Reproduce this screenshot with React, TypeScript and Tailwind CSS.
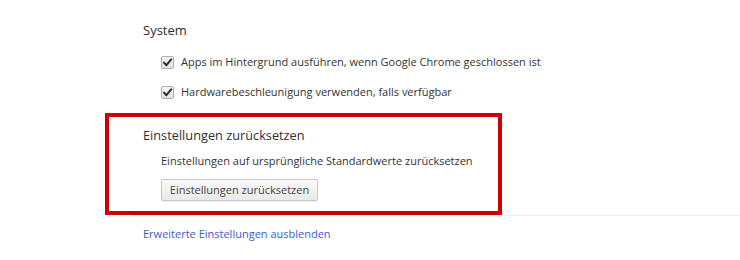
import React from "react";

function Check() {
  return (
    <span className="flex h-[13px] w-[13px] shrink-0 items-center justify-center rounded-[2px] border border-[#b0b0b0] bg-gradient-to-b from-[#f6f6f6] to-[#e2e2e2]">
      <svg width="11" height="11" viewBox="0 0 11 11">
        <path d="M2 5.6 L4.4 8.2 L9.2 2.4" fill="none" stroke="#2b2b2b" strokeWidth="2" strokeLinecap="round" strokeLinejoin="round" />
      </svg>
    </span>
  );
}

export default function App() {
  return (
    <div className="h-[260px] w-[740px] overflow-hidden whitespace-nowrap bg-white pt-[20px] text-[#333] [font-family:'Open_Sans','Noto_Sans',sans-serif]">
      <div className="flex h-[22px] items-center pl-[143px] text-[13px] text-[#303030]">System</div>
      <div className="pl-[161px]">
        <div className="mt-[5px] flex h-[30px] items-center gap-[7px] text-[11px]">
          <Check />
          <span>Apps im Hintergrund ausführen, wenn Google Chrome geschlossen ist</span>
        </div>
        <div className="flex h-[30px] items-center gap-[7px] text-[11px]">
          <Check />
          <span>Hardwarebeschleunigung verwenden, falls verfügbar</span>
        </div>
      </div>
      <div className="ml-[105px] mt-[6px] h-[102px] w-[397px] border-4 border-[#cc0000] pl-[34px] pt-[8px]">
        <div className="flex h-[22px] items-center text-[12.75px] text-[#303030]">Einstellungen zurücksetzen</div>
        <div className="mt-[4px] flex h-[20px] items-center pl-[18px] text-[11px]">
          Einstellungen auf ursprüngliche Standardwerte zurücksetzen
        </div>
        <div className="mt-[8px] pl-[18px]">
          <button className="flex h-[22px] w-[157px] items-center justify-center rounded-[2px] border border-[#c8c8c8] bg-gradient-to-b from-[#fafafa] to-[#e9e9e9] text-[11px] text-[#444] shadow-[0_1px_0_rgba(0,0,0,0.08)]">
            Einstellungen zurücksetzen
          </button>
        </div>
      </div>
      <div className="ml-[133px] h-px bg-[#eeeeee]" />
      <div className="mt-[8px] flex h-[20px] items-center pl-[143px] text-[11px] text-[#3c5ccf]">
        Erweiterte Einstellungen ausblenden
      </div>
    </div>
  );
}
